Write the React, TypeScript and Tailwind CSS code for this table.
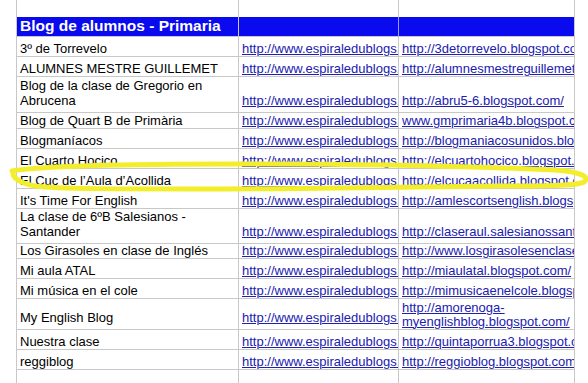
import React from "react"

type Row = {
  name: string
  url: string
  h: string
  tall?: boolean
}

const rows: Row[] = [
  { name: "3º de Torrevelo", url: "http://3detorrevelo.blogspot.com/", h: "h-[20px]" },
  { name: "ALUMNES MESTRE GUILLEMET", url: "http://alumnesmestreguillemet.blogspot.com/", h: "h-[20px]" },
  { name: "Blog de la clase de Gregorio en Abrucena", url: "http://abru5-6.blogspot.com/", h: "h-[36px]", tall: true },
  { name: "Blog de Quart B de Primària", url: "www.gmprimaria4b.blogspot.com/", h: "h-[16px]" },
  { name: "Blogmaníacos", url: "http://blogmaniacosunidos.blogspot.com/", h: "h-[20px]" },
  { name: "El Cuarto Hocico", url: "http://elcuartohocico.blogspot.com/", h: "h-[20px]" },
  { name: "El Cuc de l’Aula d’Acollida", url: "http://elcucaacollida.blogspot.com/", h: "h-[20px]" },
  { name: "It's Time For English", url: "http://amlescortsenglish.blogspot.com/", h: "h-[20px]" },
  { name: "La clase de 6ºB Salesianos - Santander", url: "http://claseraul.salesianossantander.com/", h: "h-[35px]", tall: true },
  { name: "Los Girasoles en clase de Inglés", url: "http://www.losgirasolesenclasedeingles.blogspot.com/", h: "h-[15px]" },
  { name: "Mi aula ATAL", url: "http://miaulatal.blogspot.com/", h: "h-[20px]" },
  { name: "Mi música en el cole", url: "http://mimusicaenelcole.blogspot.com/", h: "h-[20px]" },
  { name: "My English Blog", url: "http://amorenoga-myenglishblog.blogspot.com/", h: "h-[31px]", tall: true },
  { name: "Nuestra clase", url: "http://quintaporrua3.blogspot.com/", h: "h-[20px]" },
  { name: "reggiblog", url: "http://reggioblog.blogspot.com/", h: "h-[20px]" },
]

const cols = "grid grid-cols-[222px_160px_176px]"
const cell = "flex items-end overflow-hidden border-r border-[#c8c8c8] px-[3px]"
const link = "text-[#2020b0] underline decoration-1"

function BlankRow({ h }: { h: string }) {
  return (
    <div className={cols}>
      <div className={`${cell} ${h}`} />
      <div className={`${cell} ${h}`} />
      <div className={`${cell} ${h}`} />
    </div>
  )
}

export default function App() {
  return (
    <div
      className="relative h-[383px] w-[588px] overflow-hidden bg-white pl-4 text-[13px] text-black"
      style={{ fontFamily: '"Liberation Sans", Arial, sans-serif' }}
    >
      <div className="w-[559px] border-l border-[#c8c8c8]">
        <BlankRow h="h-[17px]" />

        {/* section header */}
        <div className={`${cols} bg-[#0a0aee]`}>
          <div className={`${cell} h-[20px] items-center border-b`}>
            <span className="whitespace-nowrap text-[15.5px] font-bold leading-[20px] text-white">
              Blog de alumnos - Primaria
            </span>
          </div>
          <div className={`${cell} h-[20px] border-b border-r-[#9a9af4]`} />
          <div className={`${cell} h-[20px] border-b`} />
        </div>

        {rows.map((r) => {
          const wrapUrl = r.url.includes("amorenoga")
          const pad = r.tall ? "pb-[4px]" : ""
          return (
            <div key={r.name} className={cols}>
              <div className={`${cell} ${r.h} border-b ${pad}`}>
                <span className={r.tall ? "leading-[15px]" : "whitespace-nowrap leading-[15px]"}>{r.name}</span>
              </div>
              <div className={`${cell} ${r.h} border-b ${pad}`}>
                <span className={`${link} whitespace-nowrap leading-[15px]`}>http://www.espiraledublogs.org/</span>
              </div>
              <div className={`${cell} ${r.h} border-b ${wrapUrl ? "" : pad}`}>
                <span className={`${link} ${wrapUrl ? "leading-[14px]" : "whitespace-nowrap leading-[15px]"}`}>
                  {r.url}
                </span>
              </div>
            </div>
          )
        })}

        <BlankRow h="h-[20px]" />
      </div>

      {/* yellow marker loop */}
      <svg className="pointer-events-none absolute left-0 top-0" width="588" height="383" viewBox="0 0 588 383">
        <path
          d="M 12 171 C 40 166, 120 164, 240 164 C 360 164, 470 166, 555 170 C 582 172, 590 177, 584 182 C 577 186, 540 186, 500 186 C 400 187, 300 189, 200 189 C 120 189, 60 189, 35 186 C 20 183, 13 178, 13 173"
          fill="none"
          stroke="#f3ee2c"
          strokeWidth="5"
          strokeLinecap="round"
          strokeLinejoin="round"
        />
      </svg>
    </div>
  )
}
